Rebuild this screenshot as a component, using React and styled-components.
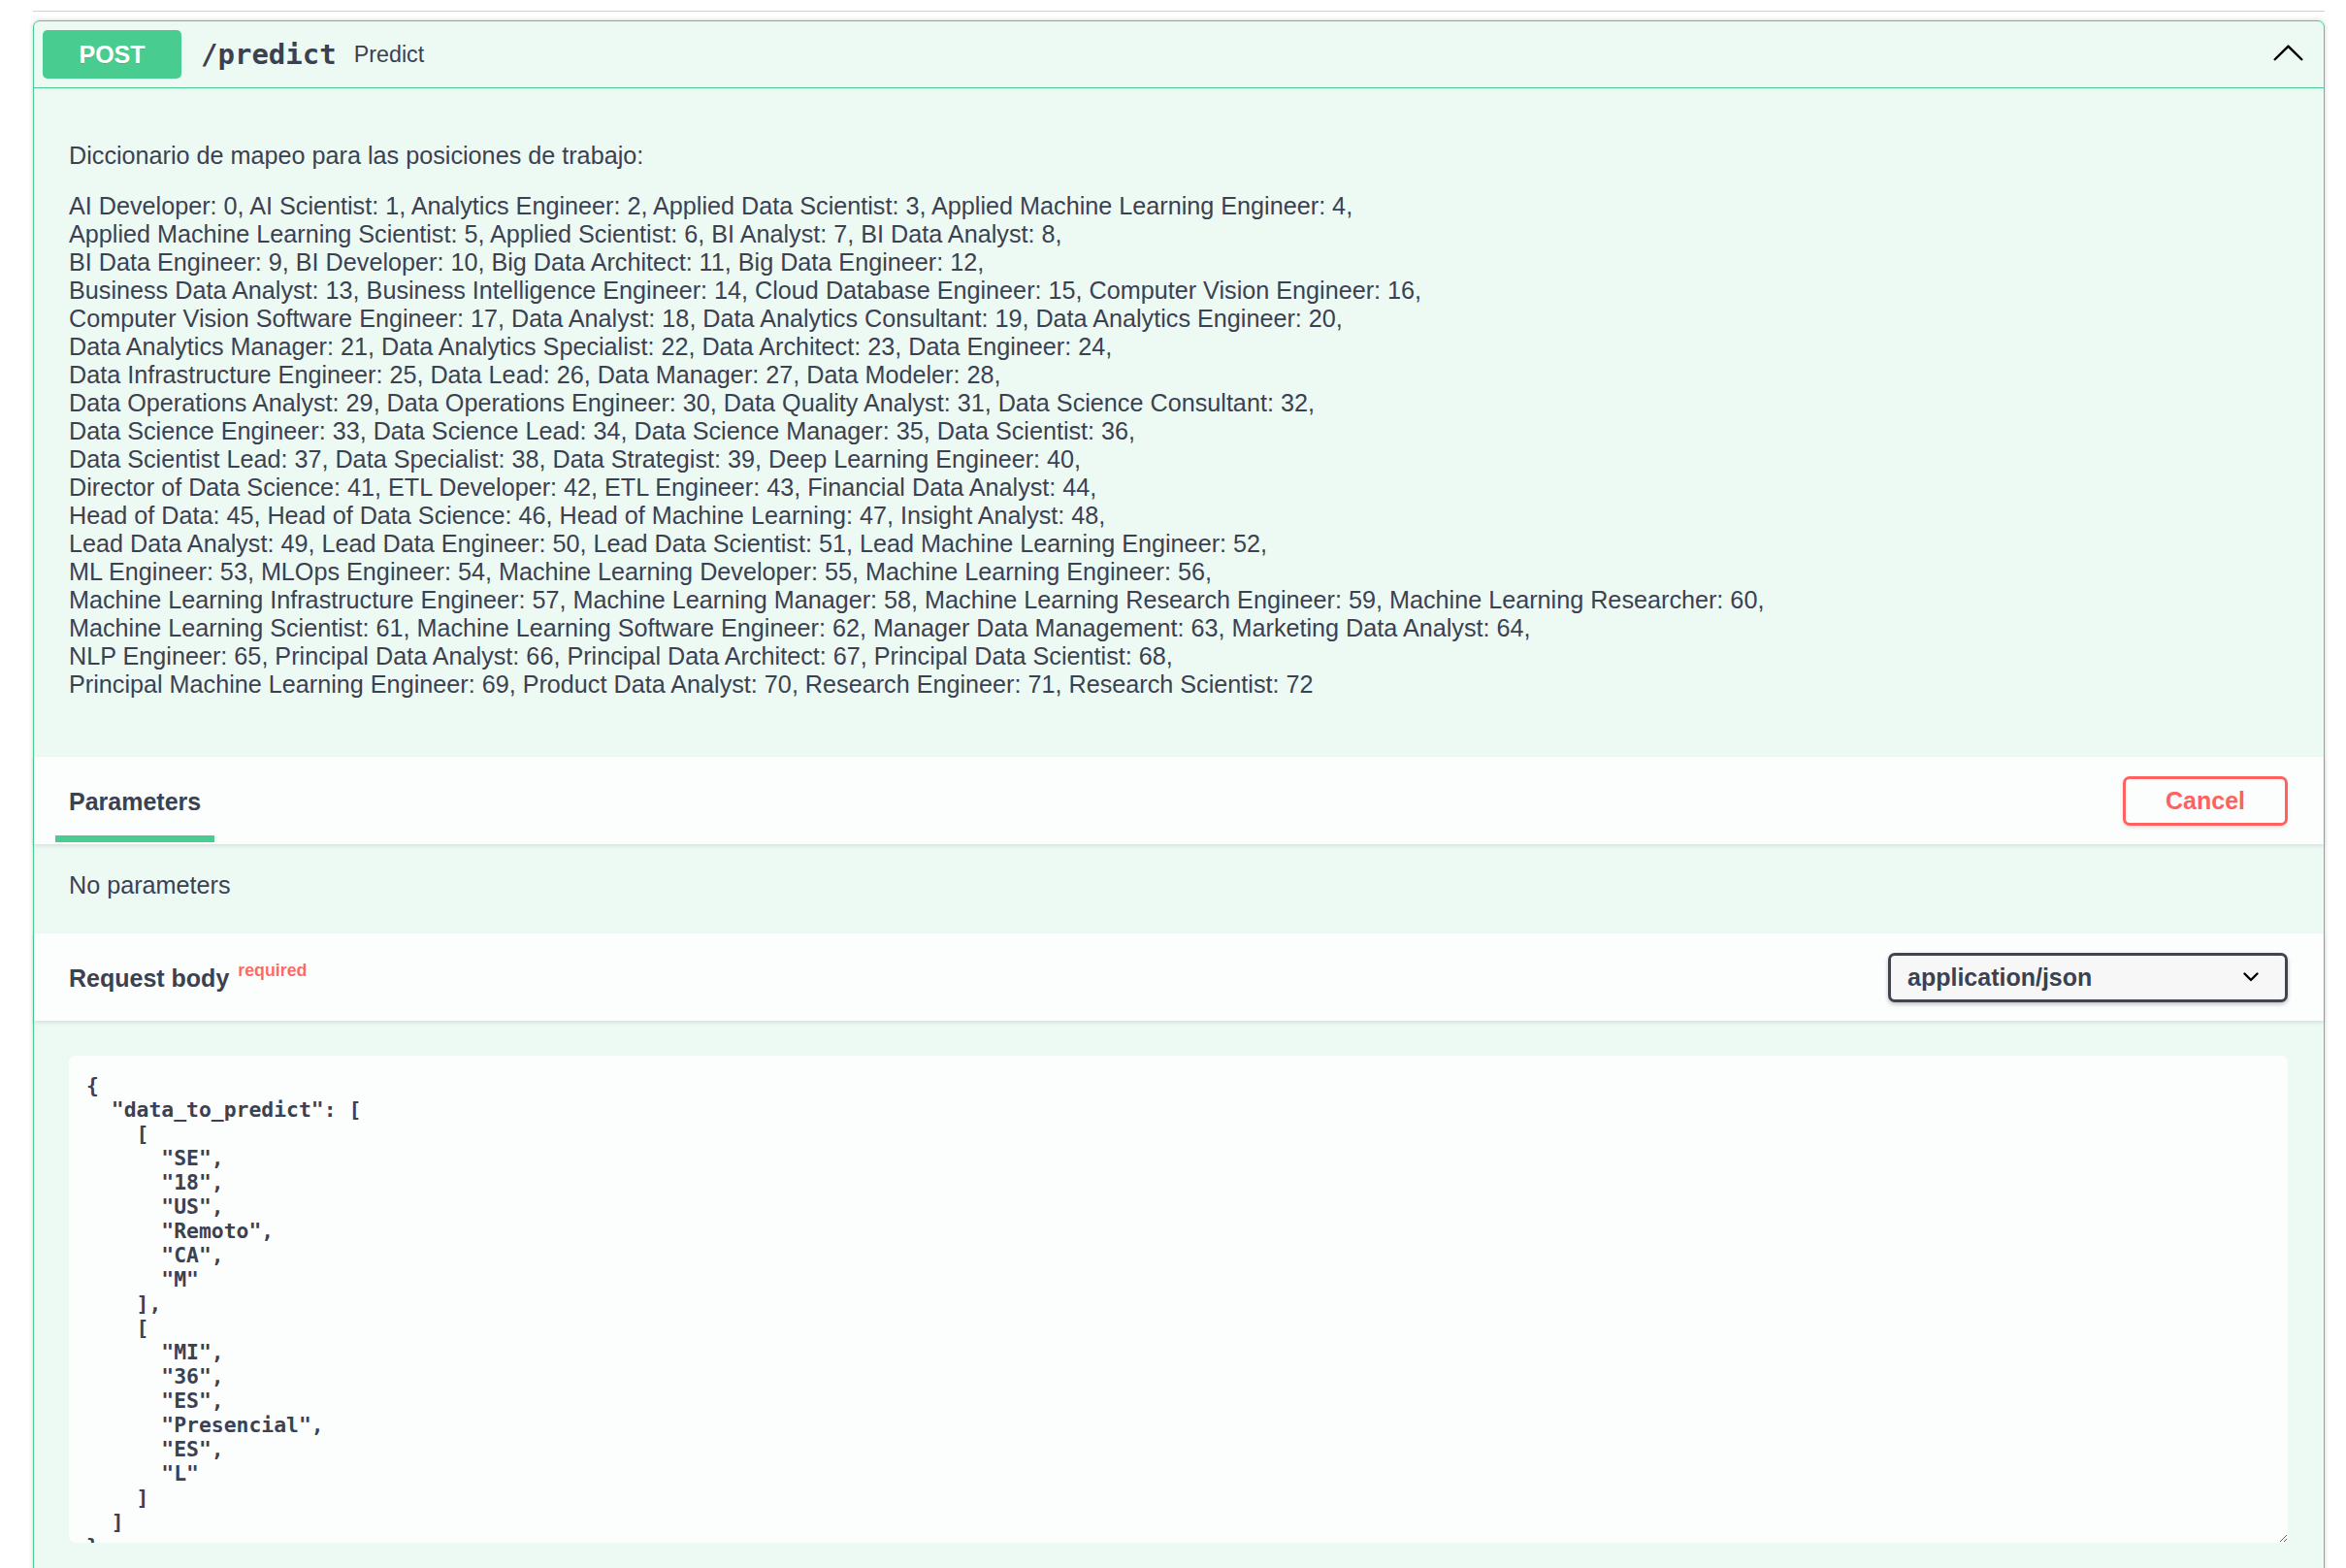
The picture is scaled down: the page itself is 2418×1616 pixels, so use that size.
import { styled, createGlobalStyle } from "styled-components";

const GlobalStyle = createGlobalStyle`
  html, body {
    margin: 0;
    background: #ffffff;
    overflow: hidden;
  }
  body {
    font-family: "Liberation Sans", Arial, sans-serif;
    color: #3b4151;
  }
`;

const Page = styled.div`
  padding: 11px 22px 0 34px;
`;

const TagDivider = styled.div`
  border-bottom: 1px solid #cfd1d5;
`;

const Opblock = styled.div`
  margin-top: 9px;
  border: 1px solid #49cc90;
  border-radius: 7px;
  background: #edfaf4;
  box-shadow: 0 0 5px rgba(0, 0, 0, 0.19);
  padding-bottom: 200px;
`;

const Summary = styled.div`
  display: flex;
  align-items: center;
  padding: 9px;
  border-bottom: 1px solid #49cc90;
`;

const Method = styled.span`
  width: 143px;
  height: 50px;
  display: flex;
  align-items: center;
  justify-content: center;
  border-radius: 5px;
  background: #49cc90;
  color: #ffffff;
  font-size: 25px;
  font-weight: 700;
  text-shadow: 0 1px 0 rgba(0, 0, 0, 0.1);
`;

const Path = styled.span`
  padding: 0 18px 0 20px;
  font-family: "DejaVu Sans Mono", monospace;
  font-weight: 700;
  font-size: 29px;
  color: #3b4151;
`;

const SummaryText = styled.span`
  flex: 1;
  font-size: 23.3px;
  color: #3b4151;
`;

const Arrow = styled.svg`
  width: 35px;
  height: 35px;
  margin: 0 10px 6px 0;
`;

const Description = styled.div`
  padding: 18px 36px;
`;

const Para = styled.p`
  margin: ${(p) => (p.$first ? "37px 0 23px" : "0 0 42px")};
  font-size: 25.2px;
  line-height: 29px;
  color: #3b4151;
`;

const SectionHeader = styled.div`
  min-height: 90px;
  box-sizing: border-box;
  padding: 0 37px 0 36px;
  display: flex;
  align-items: center;
  justify-content: space-between;
  background: rgba(255, 255, 255, 0.8);
  box-shadow: 0 2px 4px rgba(0, 0, 0, 0.1);
  position: relative;
`;

const TabTitle = styled.h4`
  position: relative;
  margin: 0;
  padding-top: 2px;
  font-size: 25px;
  line-height: 29px;
  font-weight: 700;
  color: #3b4151;

  &::after {
    content: "";
    position: absolute;
    left: -14px;
    width: 164px;
    bottom: -27px;
    height: 7px;
    background: #49cc90;
  }
`;

const CancelButton = styled.button`
  height: 51px;
  padding: 0 41px;
  border: 3.5px solid #ff6060;
  border-radius: 7px;
  background: transparent;
  color: #ff6060;
  font-family: "Liberation Sans", Arial, sans-serif;
  font-size: 25px;
  font-weight: 700;
  box-shadow: 0 2px 4px rgba(0, 0, 0, 0.1);
`;

const NoParams = styled.div`
  padding: 28px 36px 35px;
  font-size: 25.2px;
  line-height: 29px;
  color: #3b4151;
`;

const BodyTitle = styled.h4`
  margin: 0;
  padding-top: 5px;
  font-size: 25px;
  line-height: 29px;
  font-weight: 700;
  color: #3b4151;
`;

const Required = styled.span`
  position: relative;
  top: -11px;
  padding: 0 9px;
  font-size: 17.8px;
  font-weight: 700;
  color: rgba(255, 0, 0, 0.6);
`;

const Select = styled.div`
  width: 412px;
  height: 51px;
  box-sizing: border-box;
  display: flex;
  align-items: center;
  justify-content: space-between;
  padding: 0 27px 0 17px;
  border: 3.5px solid #41444e;
  border-radius: 7px;
  background: #f7f7f7;
  box-shadow: 0 2px 4px rgba(0, 0, 0, 0.25);
  font-size: 25px;
  font-weight: 700;
  color: #3b4151;
`;

const BodyWrap = styled.div`
  padding: 36px 37px 0 36px;
`;

const Editor = styled.textarea`
  display: block;
  width: 100%;
  height: 502px;
  box-sizing: border-box;
  padding: 18px 18px 17px;
  border: none;
  border-radius: 7px;
  outline: none;
  background: rgba(255, 255, 255, 0.8);
  font-family: "DejaVu Sans Mono", monospace;
  font-weight: 700;
  font-size: 21.4px;
  line-height: 25px;
  color: #3b4151;
  resize: vertical;
  overflow: hidden;
`;

const lines = [
  "AI Developer: 0, AI Scientist: 1, Analytics Engineer: 2, Applied Data Scientist: 3, Applied Machine Learning Engineer: 4,",
  "Applied Machine Learning Scientist: 5, Applied Scientist: 6, BI Analyst: 7, BI Data Analyst: 8,",
  "BI Data Engineer: 9, BI Developer: 10, Big Data Architect: 11, Big Data Engineer: 12,",
  "Business Data Analyst: 13, Business Intelligence Engineer: 14, Cloud Database Engineer: 15, Computer Vision Engineer: 16,",
  "Computer Vision Software Engineer: 17, Data Analyst: 18, Data Analytics Consultant: 19, Data Analytics Engineer: 20,",
  "Data Analytics Manager: 21, Data Analytics Specialist: 22, Data Architect: 23, Data Engineer: 24,",
  "Data Infrastructure Engineer: 25, Data Lead: 26, Data Manager: 27, Data Modeler: 28,",
  "Data Operations Analyst: 29, Data Operations Engineer: 30, Data Quality Analyst: 31, Data Science Consultant: 32,",
  "Data Science Engineer: 33, Data Science Lead: 34, Data Science Manager: 35, Data Scientist: 36,",
  "Data Scientist Lead: 37, Data Specialist: 38, Data Strategist: 39, Deep Learning Engineer: 40,",
  "Director of Data Science: 41, ETL Developer: 42, ETL Engineer: 43, Financial Data Analyst: 44,",
  "Head of Data: 45, Head of Data Science: 46, Head of Machine Learning: 47, Insight Analyst: 48,",
  "Lead Data Analyst: 49, Lead Data Engineer: 50, Lead Data Scientist: 51, Lead Machine Learning Engineer: 52,",
  "ML Engineer: 53, MLOps Engineer: 54, Machine Learning Developer: 55, Machine Learning Engineer: 56,",
  "Machine Learning Infrastructure Engineer: 57, Machine Learning Manager: 58, Machine Learning Research Engineer: 59, Machine Learning Researcher: 60,",
  "Machine Learning Scientist: 61, Machine Learning Software Engineer: 62, Manager Data Management: 63, Marketing Data Analyst: 64,",
  "NLP Engineer: 65, Principal Data Analyst: 66, Principal Data Architect: 67, Principal Data Scientist: 68,",
  "Principal Machine Learning Engineer: 69, Product Data Analyst: 70, Research Engineer: 71, Research Scientist: 72",
];

const example = JSON.stringify(
  {
    data_to_predict: [
      ["SE", "18", "US", "Remoto", "CA", "M"],
      ["MI", "36", "ES", "Presencial", "ES", "L"],
    ],
  },
  null,
  2
);

const App = () => {
  return (
    <>
      <GlobalStyle />
      <Page>
        <TagDivider />
        <Opblock>
          <Summary>
            <Method>POST</Method>
            <Path>/predict</Path>
            <SummaryText>Predict</SummaryText>
            <Arrow viewBox="0 0 20 20">
              <path
                fill="#000"
                d="M17.418 14.908c.272.268.709.268.979 0a.68.68 0 000-.969l-7.908-7.830a.697.697 0 00-.979 0l-7.908 7.830a.68.68 0 000 .969c.271.268.709.268.979 0L10 7.767l7.418 7.141z"
              />
            </Arrow>
          </Summary>
          <Description>
            <Para $first>Diccionario de mapeo para las posiciones de trabajo:</Para>
            <Para>
              {lines.map((l, i) => (
                <span key={i}>
                  {l}
                  {i < lines.length - 1 && <br />}
                </span>
              ))}
            </Para>
          </Description>
          <SectionHeader>
            <TabTitle>Parameters</TabTitle>
            <CancelButton>Cancel</CancelButton>
          </SectionHeader>
          <NoParams>No parameters</NoParams>
          <SectionHeader>
            <BodyTitle>
              Request body<Required>required</Required>
            </BodyTitle>
            <Select>
              <span>application/json</span>
              <svg width="16" height="10" viewBox="0 0 16 10">
                <path
                  d="M1.5 1.5 L8 8 L14.5 1.5"
                  fill="none"
                  stroke="#000"
                  strokeWidth="2.4"
                  strokeLinecap="round"
                  strokeLinejoin="round"
                />
              </svg>
            </Select>
          </SectionHeader>
          <BodyWrap>
            <Editor readOnly value={example} spellCheck={false} />
          </BodyWrap>
        </Opblock>
      </Page>
    </>
  );
};

export default App;
